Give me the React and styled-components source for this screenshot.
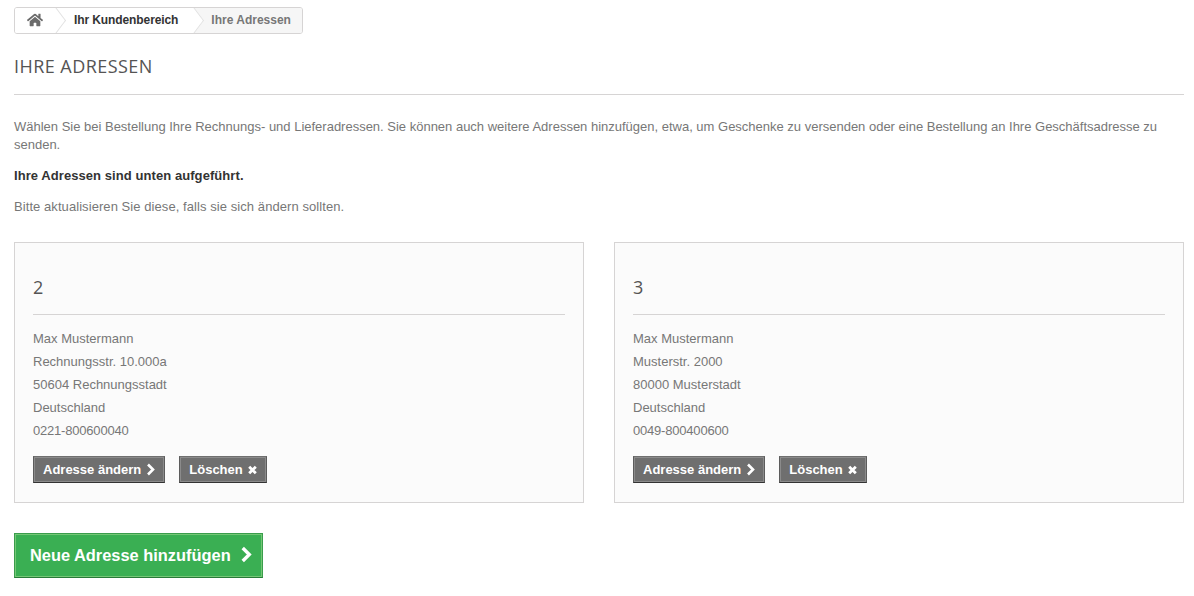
import styled, { createGlobalStyle } from 'styled-components';
import { FaHome } from 'react-icons/fa';

const GlobalStyle = createGlobalStyle`
    * {
        box-sizing: border-box;
    }
    body {
        margin: 0;
        background: #fff;
        font-family: 'Liberation Sans', Arial, sans-serif;
        font-size: 13px;
        line-height: 18px;
        color: #777;
    }
`;

const Page = styled.div`
    padding: 7px 10px 0 14px;
`;

const Breadcrumb = styled.nav`
    display: inline-flex;
    align-items: center;
    height: 27px;
    border: 1px solid #d6d4d4;
    border-radius: 3px;
    overflow: hidden;
    font-weight: bold;
    font-size: 12px;
`;

const Crumb = styled.span`
    position: relative;
    display: flex;
    align-items: center;
    height: 100%;
    padding: ${(p) => p.$pad};
    color: ${(p) => (p.$current ? '#777' : '#333')};
    background: ${(p) => (p.$current ? '#f6f6f6' : '#fff')};
    letter-spacing: ${(p) => (p.$current ? '0' : '-0.1px')};

    &::after {
        content: '';
        display: ${(p) => (p.$current ? 'none' : 'block')};
        position: absolute;
        z-index: 1;
        right: -9px;
        top: 3px;
        width: 18px;
        height: 18px;
        background: #fff;
        border-top: 1px solid #e2e2e2;
        border-right: 1px solid #e2e2e2;
        transform: rotate(45deg) skew(8deg, 8deg);
    }
`;

const Title = styled.h1`
    margin: 21px 0 23px;
    padding-bottom: 17px;
    border-bottom: 1px solid #d6d4d4;
    font-family: 'Open Sans', sans-serif;
    font-size: 18px;
    letter-spacing: 0.45px;
    line-height: 22px;
    font-weight: 400;
    color: #555454;
    text-transform: uppercase;
`;

const Intro = styled.p`
    margin: 0 0 13px;
    letter-spacing: ${(p) => (p.$long ? '-0.005px' : '0.07px')};
    color: ${(p) => (p.$strong ? '#333' : '#777')};
    font-weight: ${(p) => (p.$strong ? 'bold' : 'normal')};
`;

const Grid = styled.div`
    display: grid;
    grid-template-columns: 570px 570px;
    gap: 30px;
    margin-top: 26px;
`;

const Card = styled.section`
    height: 261px;
    padding: 27px 18px 0;
    background: #fbfbfb;
    border: 1px solid #d6d4d4;
`;

const CardTitle = styled.h3`
    margin: 0 0 12px;
    padding: 6px 0 16px;
    border-bottom: 1px solid #d6d4d4;
    font-family: 'Open Sans', sans-serif;
    font-size: 18px;
    line-height: 22px;
    font-weight: 400;
    color: #555454;
`;

const Line = styled.div`
    height: 23px;
    line-height: 23px;
    letter-spacing: ${(p) => (p.$phone ? '-0.2px' : '0')};
`;

const Actions = styled.div`
    display: flex;
    gap: 14px;
    margin-top: 14px;
`;

const SmallButton = styled.a`
    display: inline-flex;
    align-items: center;
    gap: 5px;
    height: 27px;
    padding: 0 9px;
    background: #6f6f6f;
    border: 1px solid #5c5c5c;
    border-top-color: #6f6f6f;
    border-bottom-color: #333;
    box-shadow: inset 0 0 0 1px #8b8b8b;
    color: #fff;
    font-weight: bold;
    font-size: 13px;
`;

const AddButton = styled.a`
    display: inline-flex;
    align-items: center;
    gap: 9px;
    height: 45px;
    margin-top: 30px;
    padding: 0 10px 2px 15px;
    background: #3aaf53;
    border: 1px solid #3a9d4c;
    border-bottom-color: #277a38;
    box-shadow: inset 0 0 0 1px #74c776;
    color: #fff;
    font-weight: bold;
    font-size: 16.4px;
`;

const Chevron = ({ width, height }) => (
    <svg width={width} height={height} viewBox='0 0 9 13' aria-hidden='true'>
        <path d='M2 1.5 L7 6.5 L2 11.5' fill='none' stroke='currentColor' strokeWidth='2.6' />
    </svg>
);

const Cross = () => (
    <svg width='9' height='10' viewBox='0 0 9 10' aria-hidden='true'>
        <path d='M1.2 1.7 L7.8 8.3 M7.8 1.7 L1.2 8.3' fill='none' stroke='currentColor' strokeWidth='2.8' />
    </svg>
);

const addresses = [
    {
        id: 2,
        lines: ['Max Mustermann', 'Rechnungsstr. 10.000a', '50604 Rechnungsstadt', 'Deutschland'],
        phone: '0221-800600040',
    },
    {
        id: 3,
        lines: ['Max Mustermann', 'Musterstr. 2000', '80000 Musterstadt', 'Deutschland'],
        phone: '0049-800400600',
    },
];

const App = () => {
    return (
        <Page>
            <GlobalStyle />
            <Breadcrumb>
                <Crumb $pad='0 12px 2px 12px'>
                    <FaHome size={16} color='#6b6b6b' />
                </Crumb>
                <Crumb $pad='0 15px 2px 19px'>Ihr Kundenbereich</Crumb>
                <Crumb $current $pad='0 11px 2px 18px'>
                    Ihre Adressen
                </Crumb>
            </Breadcrumb>

            <Title>Ihre Adressen</Title>

            <Intro $long>
                Wählen Sie bei Bestellung Ihre Rechnungs- und Lieferadressen. Sie können auch weitere Adressen
                hinzufügen, etwa, um Geschenke zu versenden oder eine Bestellung an Ihre Geschäftsadresse zu senden.
            </Intro>
            <Intro $strong>Ihre Adressen sind unten aufgeführt.</Intro>
            <Intro>Bitte aktualisieren Sie diese, falls sie sich ändern sollten.</Intro>

            <Grid>
                {addresses.map((a) => (
                    <Card key={a.id}>
                        <CardTitle>{a.id}</CardTitle>
                        {a.lines.map((l) => (
                            <Line key={l}>{l}</Line>
                        ))}
                        <Line $phone>{a.phone}</Line>
                        <Actions>
                            <SmallButton>
                                Adresse ändern <Chevron width={9} height={13} />
                            </SmallButton>
                            <SmallButton>
                                Löschen <Cross />
                            </SmallButton>
                        </Actions>
                    </Card>
                ))}
            </Grid>

            <AddButton>
                Neue Adresse hinzufügen <Chevron width={12} height={17} />
            </AddButton>
        </Page>
    );
};

export default App;
